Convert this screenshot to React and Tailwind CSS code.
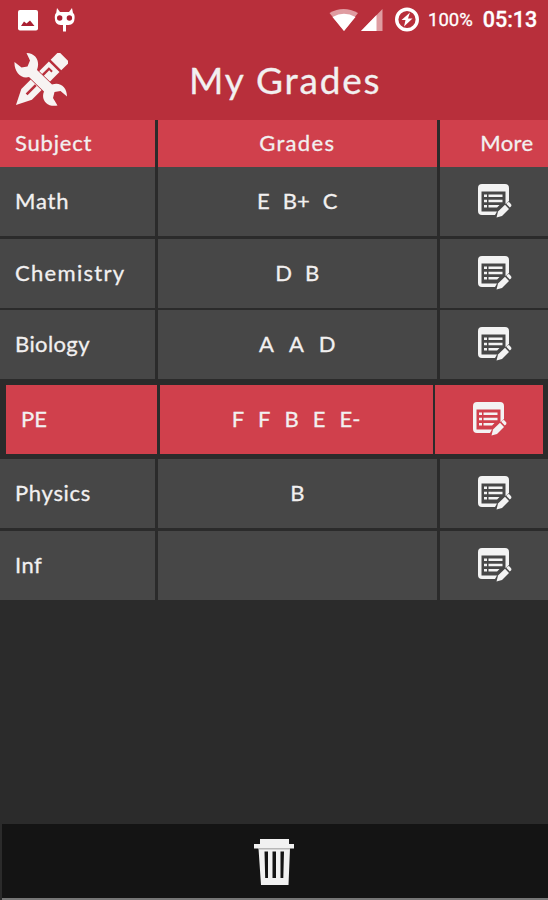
const rows = [
  { name: 'Math', track: 'tracking-[0.8px]', grades: ['E', 'B+', 'C'], gap: 'gap-[13px]' },
  { name: 'Chemistry', track: 'tracking-[1.3px]', grades: ['D', 'B'], gap: 'gap-[13px]' },
  { name: 'Biology', track: 'tracking-[0.4px]', grades: ['A', 'A', 'D'], gap: 'gap-[15px]' },
  { name: 'PE', track: 'tracking-[0px]', grades: ['F', 'F', 'B', 'E', 'E-'], gap: 'gap-[14px]', selected: true },
  { name: 'Physics', track: 'tracking-[0.7px]', grades: ['B'], gap: 'gap-3' },
  { name: 'Inf', track: 'tracking-[0.5px]', grades: [], gap: 'gap-3' },
];

function EditIcon() {
  return (
    <svg width="35" height="36" viewBox="0 0 35 36" className="block shrink-0">
      <path
        fillRule="evenodd"
        d="M5 1H28Q32 1 32 5V18L28.5 21V8.5H4.5V28.5H20L18 32H5Q1 32 1 28V5Q1 1 5 1Z"
        fill="#f3f3f3"
      />
      <path d="M7 11.5h3v2.4H7zM11.5 11.5h14v2.4h-14zM7 16.8h3v2.4H7zM11.5 16.8h14v2.4h-14zM7 22.1h3v2.4H7zM11.5 22.1h11l-2.4 2.4h-8.6z" fill="#f3f3f3" />
      <path d="M19.5 34.5L21 28.5L28 21.8L32 26L25 33Z" fill="#f3f3f3" />
      <path d="M29.2 20.7L30.5 19.4Q31.6 18.6 32.8 19.8L34 21.2Q34.9 22.4 34 23.4L32.8 24.6Z" fill="#f3f3f3" />
    </svg>
  );
}

function ToolsIcon() {
  return (
    <svg width="54" height="54" viewBox="0 0 54 54" className="block">
      <g transform="translate(2 52) rotate(-45)" fill="#f7f3f2">
        <path d="M0 0L15 -7.5H54V7.5H15Z" />
        <path d="M56.5 -7.5H66Q68 -7.5 68 -5.5V5.5Q68 7.5 66 7.5H56.5Z" />
        <path d="M15 -1.3H28V1.3H15ZM40 -3.5H50V2H48V-1H40Z" fill="#b82f3b" />
      </g>
      <path
        d="M12.5 0C23 .5 26 9 23 17L38 31.5C46 28.5 53 34 53 43.5L46.5 38L40.5 39L39 45L43.5 52.5C33 54.5 26.5 46.5 30 38.5L15 24C7 26.5 0 18.5 .5 9L7.5 14.5L13.5 13.5L16 7.5Z"
        fill="#f7f3f2"
        stroke="#b82f3b"
        strokeWidth="1.4"
        paintOrder="stroke"
      />
    </svg>
  );
}

function StatusBar() {
  return (
    <div className="flex h-10 items-center font-['Roboto',sans-serif] text-white">
      <svg width="90" height="40" viewBox="0 0 90 40" className="block">
        <rect x="18" y="10" width="20" height="20.5" rx="2" fill="#fff" />
        <path d="M21 26L24 21.5L26.5 23.5L30 20.5L34.5 26Z" fill="#a91f31" />
        <path d="M57 8L60 12H69L72 8L73 13Q74.8 14 74.6 18Q74.4 25 68.5 25H66V31.5H63V25H60.5Q55 25 54.8 18Q54.6 14 56.2 13Z" fill="#fff" />
        <circle cx="59.7" cy="18" r="2.7" fill="#a91f31" />
        <circle cx="69.4" cy="18" r="2.7" fill="#a91f31" />
      </svg>
      <svg width="95" height="40" viewBox="0 0 95 40" className="ml-[238px] block">
        <path d="M1.5 13Q15.5 5 30 13L16 31Z" fill="#df9ca1" />
        <path d="M4.5 17Q16 10.5 27.5 17L16 31Z" fill="#fff" />
        <path d="M33 31L54.5 9V31Z" fill="#df9ca1" />
        <path d="M33 31L48.5 15V31Z" fill="#fff" />
        <circle cx="79" cy="19.5" r="10.3" fill="none" stroke="#fff" strokeWidth="3.4" />
        <path d="M82 12.5L73.5 20H77.5L76 26.5L84.5 18.5H80Z" fill="#fff" />
      </svg>
      <span className="ml-[5px] text-[18.5px] leading-10">100%</span>
      <span className="ml-[10px] text-[21.5px] leading-[42px] font-medium">05:13</span>
    </div>
  );
}

function Row({ name, track, grades, gap, selected }) {
  const cell = selected ? 'bg-[#d0404c]' : 'bg-[#474747]';
  const cols = selected
    ? 'grid-cols-[151px_273px_108px] gap-x-[2.5px] pl-[6px] my-[3px]'
    : 'grid-cols-[155px_279.5px_109px] gap-x-[2.5px]';
  return (
    <div className={`grid h-[69px] shrink-0 ${cols}`}>
      <div className={`flex items-center pb-[1px] pl-[15px] ${track} ${cell}`}>{name}</div>
      <div className={`flex items-center justify-center pb-[1px] ${gap} ${cell}`}>
        {grades.map((g, i) => (
          <span key={i}>{g}</span>
        ))}
      </div>
      <div className={`flex items-center pb-[1px] pl-[37px] ${cell}`}>
        <EditIcon />
      </div>
    </div>
  );
}

export default function App() {
  return (
    <div className="flex h-[900px] w-[548px] flex-col overflow-hidden bg-[#2b2b2b] font-['Lato',sans-serif] text-[22px] leading-none text-[#f2f0f0] [-webkit-text-stroke:0.3px]">
      <header className="h-[120px] shrink-0 bg-[#b82f3b]">
        <StatusBar />
        <div className="flex h-20 items-center pl-[14px]">
          <ToolsIcon />
          <h1 className="ml-[121px] pb-[2px] text-[37px] tracking-[1.8px]">My Grades</h1>
        </div>
      </header>
      <div className="grid h-[47px] shrink-0 grid-cols-[155px_279.5px_109px] gap-x-[2.5px]">
        <div className="flex items-center bg-[#d0404c] pb-[1px] pl-[15px] tracking-[0.8px]">Subject</div>
        <div className="flex items-center justify-center bg-[#d0404c] pb-[1px] tracking-[1.3px]">Grades</div>
        <div className="flex items-center justify-end bg-[#d0404c] pr-[15px] pb-[1px] tracking-[0.4px]">More</div>
      </div>
      <main className="flex flex-1 flex-col gap-[2.6px]">
        {rows.map((r) => (
          <Row key={r.name} {...r} />
        ))}
      </main>
      <footer className="ml-[2px] flex h-[76px] shrink-0 justify-center border-b-2 border-[#777] bg-[#141414] pt-[15px] pr-[2px]">
        <svg width="42" height="47" viewBox="0 0 42 47" className="block">
          <path d="M7 0H36V5H41V9.5H37L35.5 46H8L5.5 9.5H1V5H7Z" fill="#f1f1f1" />
          <path d="M6 9.2H37V10.4H6Z" fill="#aaa" />
          <path d="M11.5 12.5H15V39H12.2ZM19.5 12.5H23V39H19.5ZM27.5 12.5H31L30.3 39H27.5Z" fill="#141414" />
        </svg>
      </footer>
    </div>
  );
}
